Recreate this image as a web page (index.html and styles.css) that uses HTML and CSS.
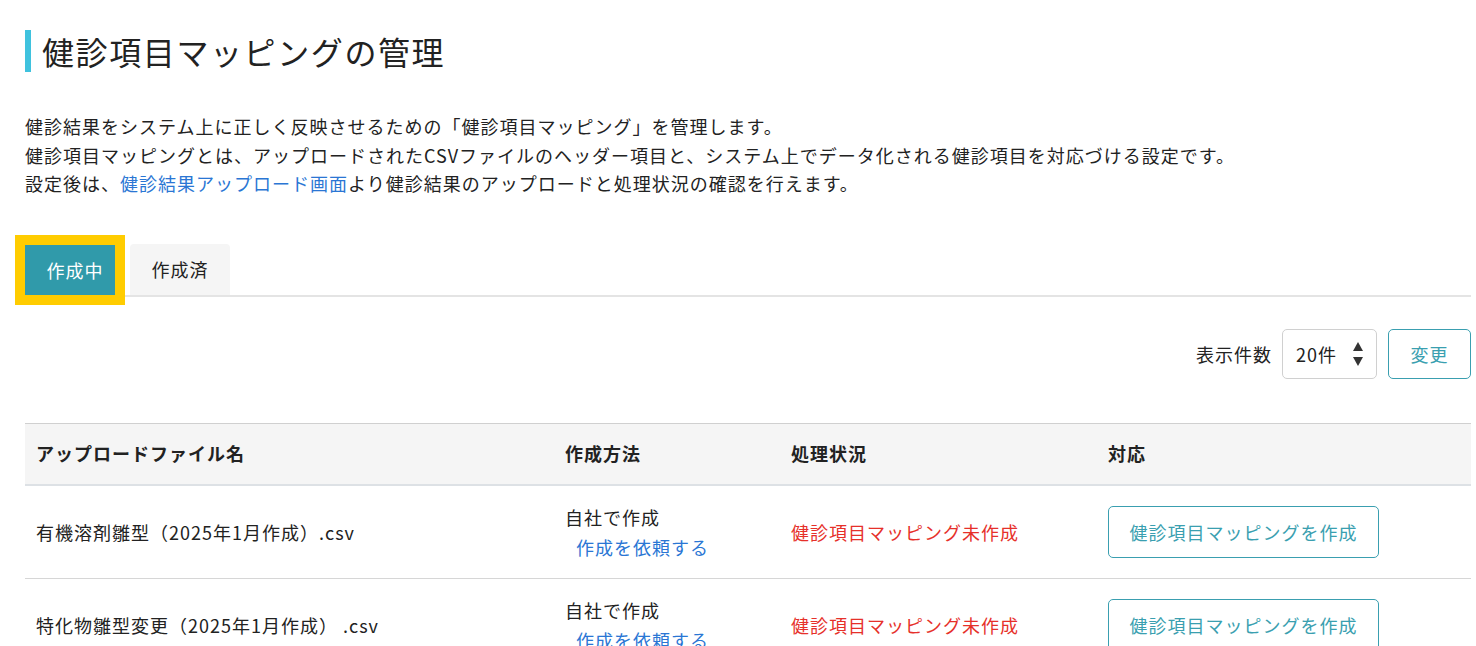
FILE: index.html
```html
<!DOCTYPE html>
<html lang="ja">

<head>
    <meta charset="UTF-8">
    <meta name="viewport" content="width=device-width, initial-scale=1.0">
    <title>健診項目マッピングの管理</title>
    <link rel="stylesheet" href="styles.css">
</head>

<body>
    <div class="page">
        <h1 class="page-title">健診項目マッピングの管理</h1>

        <div class="lead">
            <p>健診結果をシステム上に正しく反映させるための「健診項目マッピング」を管理します。</p>
            <p>健診項目マッピングとは、アップロードされたCSVファイルのヘッダー項目と、システム上でデータ化される健診項目を対応づける設定です。</p>
            <p>設定後は、<a href="javascript:void(0)">健診結果アップロード画面</a>より健診結果のアップロードと処理状況の確認を行えます。</p>
        </div>

        <!-- タブ -->
        <div class="tabs">
            <a href="javascript:void(0)" class="tab active">作成中</a>
            <a href="javascript:void(0)" class="tab">作成済</a>
        </div>

        <!-- 表示件数 -->
        <div class="toolbar">
            <span class="toolbar-label">表示件数</span>
            <div class="select">
                <span>20件</span>
                <svg width="10" height="24" viewBox="0 0 10 24">
                    <path d="M5 0 L10 9 H0 Z" fill="#333" />
                    <path d="M0 15 H10 L5 24 Z" fill="#333" />
                </svg>
            </div>
            <button class="btn-change">変更</button>
        </div>

        <table class="list">
            <colgroup>
                <col style="width: 529px">
                <col style="width: 226px">
                <col style="width: 317px">
                <col>
            </colgroup>
            <thead>
                <tr>
                    <th>アップロードファイル名</th>
                    <th>作成方法</th>
                    <th>処理状況</th>
                    <th>対応</th>
                </tr>
            </thead>
            <tbody>
                <tr>
                    <td>有機溶剤雛型（2025年1月作成）.csv</td>
                    <td>
                        <div class="method">自社で作成</div>
                        <a href="javascript:void(0)" class="request">作成を依頼する</a>
                    </td>
                    <td class="status">健診項目マッピング未作成</td>
                    <td><button class="btn-create">健診項目マッピングを作成</button></td>
                </tr>
                <tr>
                    <td>特化物雛型変更（2025年1月作成） .csv</td>
                    <td>
                        <div class="method">自社で作成</div>
                        <a href="javascript:void(0)" class="request">作成を依頼する</a>
                    </td>
                    <td class="status">健診項目マッピング未作成</td>
                    <td><button class="btn-create">健診項目マッピングを作成</button></td>
                </tr>
            </tbody>
        </table>
    </div>
</body>

</html>
```

FILE: styles.css
```css
* {
    padding: 0;
    margin: 0;
    box-sizing: border-box;
}

body {
    font-family: "Noto Sans CJK JP", "Noto Sans", sans-serif;
    font-size: 18px;
    letter-spacing: 1px;
    color: #222;
    background-color: white;
}

a {
    color: #2a76d4;
    text-decoration: none;
}

.page {
    padding: 30px 5px 0 25px;
}

.page-title {
    height: 42px;
    line-height: 42px;
    padding-left: 11px;
    border-left: 6px solid #3fc2de;
    font-size: 32px;
    font-weight: normal;
    letter-spacing: 1.6px;
}

.lead {
    margin-top: 40px;
    line-height: 28.6px;
}

/* タブ */
.tabs {
    display: flex;
    gap: 15px;
    margin-top: 46px;
    height: 53px;
    align-items: flex-end;
    border-bottom: 2px solid #e4e4e4;
}

.tab {
    display: block;
    width: 100px;
    height: 51px;
    line-height: 51px;
    text-align: center;
    color: #222;
    background-color: #f5f5f5;
    border-radius: 4px 4px 0 0;
}

.tab.active {
    position: relative;
    width: 90px;
    height: 50px;
    line-height: 50px;
    padding-left: 10px;
    color: white;
    background-color: #309aaa;
    border-radius: 0;
    outline: 10px solid #ffcc00;
    z-index: 1;
}

/* 表示件数 */
.toolbar {
    display: flex;
    justify-content: flex-end;
    align-items: center;
    margin-top: 32px;
}

.toolbar-label {
    margin-right: 10px;
}

.select {
    display: flex;
    align-items: center;
    justify-content: space-between;
    width: 95px;
    height: 50px;
    padding: 0 13px;
    border: 1px solid #d0d0d0;
    border-radius: 5px;
}

.btn-change {
    width: 83px;
    height: 50px;
    margin-left: 11px;
    font: inherit;
    letter-spacing: inherit;
    color: #3a9fb0;
    background-color: white;
    border: 1px solid #3a9fb0;
    border-radius: 5px;
}

/* 一覧 */
.list {
    width: 100%;
    margin-top: 44px;
    border-collapse: collapse;
    table-layout: fixed;
}

.list th {
    height: 62px;
    padding: 0 11px 2px;
    text-align: left;
    font-weight: bold;
    background-color: #f5f5f5;
    border-top: 1px solid #d0d0d0;
    border-bottom: 2px solid #dde1e5;
}

.list td {
    padding: 16px 11px;
    vertical-align: middle;
    border-bottom: 1px solid #d6d6d6;
    line-height: 30px;
}

.request {
    display: block;
    margin-left: 11px;
}

.status {
    color: #e6302a;
}

.btn-create {
    width: 271px;
    height: 52px;
    font: inherit;
    letter-spacing: inherit;
    color: #3a9fb0;
    background-color: white;
    border: 1px solid #3a9fb0;
    border-radius: 5px;
}
```
